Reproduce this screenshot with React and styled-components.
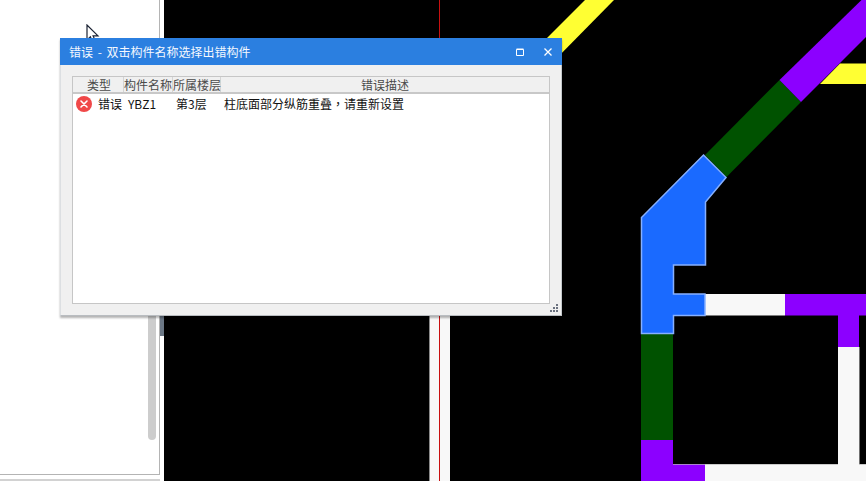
import styled, { createGlobalStyle } from "styled-components";

const GlobalStyle = createGlobalStyle`
  html, body {
    margin: 0;
    padding: 0;
    background: #000;
  }
  * {
    box-sizing: border-box;
  }
`;

const Page = styled.div`
  position: relative;
  display: flex;
  width: 866px;
  height: 481px;
  overflow: hidden;
  background: #fff;
  font-family: "Noto Sans CJK SC", "Liberation Sans", sans-serif;
  font-size: 12px;
`;

const Sidebar = styled.aside`
  display: flex;
  flex: 0 0 164px;
  background: #fff;
`;

const SideColumn = styled.div`
  display: flex;
  flex-direction: column;
  width: 160px;
`;

const SidePane = styled.div`
  display: flex;
  justify-content: flex-end;
  height: 475px;
  padding-right: 3px;
  border-right: 1px solid #b4b4b4;
  border-bottom: 1px solid #b4b4b4;
`;

const ScrollThumb = styled.div`
  width: 8px;
  height: 140px;
  margin-top: 300px;
  border-radius: 0 0 4px 4px;
  background: #cdcdcd;
`;

const SideFooter = styled.div`
  height: 2px;
  margin-top: 4px;
  background: #d2d2d2;
`;

const SideStrip = styled.div`
  flex: 0 0 4px;
`;

const StripMark = styled.div`
  height: 36px;
  margin-top: 300px;
  background: #6b7785;
`;

const Canvas = styled.svg`
  display: block;
  flex: 1;
  height: 481px;
  background: #000;
`;

const Dialog = styled.section`
  position: absolute;
  top: 38px;
  left: 60px;
  display: flex;
  flex-direction: column;
  width: 502px;
  height: 278px;
  background: #f0f0f0;
  border-right: 1px solid #c4c8cc;
  border-bottom: 1px solid #b8bcc0;
  border-left: 1px solid #dcdfe2;
  box-shadow: 0 2px 2px rgba(0, 0, 0, 0.3);
`;

const TitleBar = styled.header`
  display: flex;
  align-items: center;
  flex: 0 0 27px;
  margin: 0 -1px 0 -1px;
  padding: 0 10px 0 9px;
  background: #2b7fe0;
  color: #f4f8fe;
`;

const Title = styled.span`
  flex: 1;
  line-height: 16px;
  word-spacing: 2px;
`;

const WindowButton = styled.button`
  display: flex;
  align-items: center;
  justify-content: center;
  width: 8px;
  height: 8px;
  margin-left: ${(p) => p.$gap}px;
  padding: 0;
  border: 0;
  background: none;
`;

const Body = styled.div`
  position: relative;
  flex: 1;
  padding: 11px;
`;

const Table = styled.div`
  display: flex;
  flex-direction: column;
  height: 228px;
  background: #fff;
  border: 1px solid #c6c6c6;
`;

const HeaderRow = styled.div`
  display: grid;
  grid-template-columns: 51px 49px 48px 1fr;
  flex: 0 0 17px;
  background: #f0f0f0;
  border-bottom: 2px solid #c8c8c8;
  color: #4a4a4a;
`;

const HeaderCell = styled.div`
  height: 15px;
  padding-left: ${(p) => p.$indent || 0}px;
  border-right: ${(p) => (p.$last ? 0 : "1px solid #d4d4d4")};
  line-height: 15px;
  text-align: center;
  white-space: nowrap;
`;

const DataRow = styled.div`
  display: grid;
  grid-template-columns: 51px 49px 48px 1fr;
  align-items: center;
  height: 20px;
  color: #111;
  line-height: 20px;
`;

const TypeCell = styled.div`
  display: flex;
  align-items: center;
  gap: 6px;
  padding-left: 3px;
`;

const DataCell = styled.div`
  padding-left: ${(p) => p.$pad}px;
  white-space: nowrap;
`;

// the comma sits in the middle of its cell in the reference
const Comma = styled.span`
  font-family: "Noto Sans CJK TC", sans-serif;
`;

const Grip = styled.svg`
  position: absolute;
  right: 3px;
  bottom: 3px;
`;

const Pointer = styled.svg`
  position: absolute;
  top: 24px;
  left: 86px;
`;

const ErrorIcon = () => (
  <svg width="16" height="16" viewBox="0 0 16 16">
    <circle cx="8" cy="8" r="8" fill="#f04848" />
    <path d="M5 5l6 6M11 5l-6 6" stroke="#fff" strokeWidth="1.6" strokeLinecap="round" />
  </svg>
);

// the CAD drawing, in page coordinates
const Drawing = () => (
  <Canvas viewBox="164 0 702 481">
    <polygon points="585,0 614,0 550,65 535,50" fill="#ffff33" />
    <polygon points="840,63.5 866,63.5 866,84 820,84" fill="#ffff33" />

    <rect x="429" y="300" width="21" height="181" fill="#f8f8f8" />
    <rect x="429" y="300" width="1" height="181" fill="#8a8a8a" />
    <line x1="439.5" y1="0" x2="439.5" y2="481" stroke="#c81010" strokeWidth="1" />

    <polygon points="705,155 726.5,177 801,102 779.5,80" fill="#005200" />
    <polygon points="779.5,80 861.5,0 866,0 866,37 801,102" fill="#8c00ff" />

    <rect x="641" y="334" width="32" height="106" fill="#005200" />
    <rect x="641" y="440" width="32" height="41" fill="#8c00ff" />
    <rect x="673" y="464" width="32" height="17" fill="#8c00ff" />
    <rect x="705" y="464" width="161" height="17" fill="#f8f8f8" />
    <rect x="673" y="464" width="193" height="1" fill="#b8b8b8" opacity="0.7" />

    <rect x="705" y="294" width="80" height="21.5" fill="#f8f8f8" />
    <rect x="785" y="294" width="81" height="21.5" fill="#8c00ff" />
    <rect x="838" y="315" width="21" height="33" fill="#8c00ff" />
    <rect x="838" y="347" width="21" height="118" fill="#f8f8f8" />
    <rect x="859" y="347" width="1" height="117" fill="#707070" />

    <polygon
      points="703.5,155 726,177.5 705.5,202 705.5,265 673.5,265 673.5,294 705,294 705,315.5 673.5,315.5 673.5,333.5 641.5,333.5 641.5,217.5"
      fill="#1a6aff"
      stroke="#86b0ff"
      strokeWidth="1.5"
    />
  </Canvas>
);

export default function App() {
  return (
    <>
      <GlobalStyle />
      <Page>
        <Sidebar>
          <SideColumn>
            <SidePane>
              <ScrollThumb />
            </SidePane>
            <SideFooter />
          </SideColumn>
          <SideStrip>
            <StripMark />
          </SideStrip>
        </Sidebar>
        <Drawing />

        <Pointer width="14" height="20" viewBox="0 0 14 20">
          <path
            d="M1 1v15l3.4-3.2 2.4 5.9 2.8-1.2-2.5-5.6h4.9z"
            fill="#fff"
            stroke="#1a2233"
            strokeWidth="1.2"
          />
        </Pointer>

        <Dialog>
          <TitleBar>
            <Title>错误 - 双击构件名称选择出错构件</Title>
            <WindowButton $gap={0}>
              <svg width="8" height="8" viewBox="0 0 8 8">
                <path d="M.5 1.5h7v6h-7zM.5 1h7" fill="none" stroke="#fff" strokeWidth="1" />
              </svg>
            </WindowButton>
            <WindowButton $gap={20}>
              <svg width="8" height="8" viewBox="0 0 8 8">
                <path d="M.5.5l7 7M7.5.5l-7 7" fill="none" stroke="#fff" strokeWidth="1.3" />
              </svg>
            </WindowButton>
          </TitleBar>
          <Body>
            <Table>
              <HeaderRow>
                <HeaderCell $indent={2}>类型</HeaderCell>
                <HeaderCell>构件名称</HeaderCell>
                <HeaderCell>所属楼层</HeaderCell>
                <HeaderCell $last>错误描述</HeaderCell>
              </HeaderRow>
              <DataRow>
                <TypeCell>
                  <ErrorIcon />
                  错误
                </TypeCell>
                <DataCell $pad={4}>YBZ1</DataCell>
                <DataCell $pad={3}>第3层</DataCell>
                <DataCell $pad={3}>
                  柱底面部分纵筋重叠<Comma>，</Comma>请重新设置
                </DataCell>
              </DataRow>
            </Table>
            <Grip width="8" height="8" viewBox="0 0 8 8" fill="#6b7280">
              <rect x="6" y="0" width="2" height="2" />
              <rect x="3" y="3" width="2" height="2" />
              <rect x="6" y="3" width="2" height="2" />
              <rect x="0" y="6" width="2" height="2" />
              <rect x="3" y="6" width="2" height="2" />
              <rect x="6" y="6" width="2" height="2" />
            </Grip>
          </Body>
        </Dialog>
      </Page>
    </>
  );
}
